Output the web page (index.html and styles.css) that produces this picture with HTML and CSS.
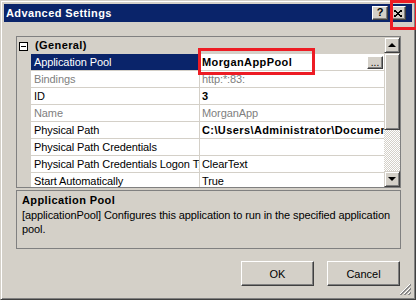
FILE: index.html
```html
<!DOCTYPE html>
<html lang="en">
<head>
    <meta charset="UTF-8">
    <title>Advanced Settings</title>
    <link rel="stylesheet" href="styles.css">
</head>
<body>
    <div class="window">
        <!-- title bar -->
        <div class="titlebar">
            <span class="title">Advanced Settings</span>
            <div class="caption-btns">
                <span class="cap-btn help">?</span>
                <span class="cap-btn close">
                    <svg width="8" height="7" viewBox="0 0 8 7"><path d="M0 0.5L7 6.5M1 0.5L8 6.5M7 0.5L0 6.5M8 0.5L1 6.5" stroke="#000" stroke-width="1" fill="none" shape-rendering="crispEdges"/></svg>
                </span>
            </div>
        </div>

        <div class="content">
            <!-- property grid -->
            <div class="grid">
                <div class="rows">
                    <div class="row cat">
                        <span class="margin"><span class="toggle"></span></span>
                        <span class="cat-name">(General)</span>
                    </div>
                    <div class="row selected">
                        <span class="margin"></span>
                        <span class="label">Application Pool</span>
                        <span class="value"><b>MorganAppPool</b><span class="dots">...</span></span>
                    </div>
                    <div class="row readonly">
                        <span class="margin"></span>
                        <span class="label">Bindings</span>
                        <span class="value">http:*:83:</span>
                    </div>
                    <div class="row">
                        <span class="margin"></span>
                        <span class="label">ID</span>
                        <span class="value"><b>3</b></span>
                    </div>
                    <div class="row readonly">
                        <span class="margin"></span>
                        <span class="label">Name</span>
                        <span class="value">MorganApp</span>
                    </div>
                    <div class="row">
                        <span class="margin"></span>
                        <span class="label">Physical Path</span>
                        <span class="value"><b>C:\Users\Administrator\Documents\Sites</b></span>
                    </div>
                    <div class="row">
                        <span class="margin"></span>
                        <span class="label">Physical Path Credentials</span>
                        <span class="value"></span>
                    </div>
                    <div class="row">
                        <span class="margin"></span>
                        <span class="label">Physical Path Credentials Logon Type</span>
                        <span class="value">ClearText</span>
                    </div>
                    <div class="row">
                        <span class="margin"></span>
                        <span class="label">Start Automatically</span>
                        <span class="value">True</span>
                    </div>
                </div>
                <div class="scrollbar">
                    <span class="sb-btn"><span class="arrow-up"></span></span>
                    <span class="sb-thumb"></span>
                    <span class="sb-track"></span>
                    <span class="sb-btn"><span class="arrow-down"></span></span>
                </div>
            </div>

            <!-- description -->
            <div class="desc">
                <div class="desc-title">Application Pool</div>
                <div class="desc-text">[applicationPool] Configures this application to run in the specified application pool.</div>
            </div>

            <div class="actions">
                <button class="btn">OK</button>
                <button class="btn">Cancel</button>
            </div>
        </div>

        <svg class="grip" width="12" height="12" viewBox="0 0 12 12">
            <path d="M11 1L1 11M11 5L5 11M11 9L9 11" stroke="#fff" fill="none"/>
            <path d="M12 1L1 12M12 2L2 12M12 5L5 12M12 6L6 12M12 9L9 12M12 10L10 12" stroke="#808080" fill="none" stroke-width="0.9"/>
        </svg>

        <span class="mark mark-close"></span>
        <span class="mark mark-pool"></span>
    </div>
</body>
</html>
```

FILE: styles.css
```css
* {
    box-sizing: border-box;
}

body {
    margin: 0;
    font-family: "Liberation Sans", Arial, sans-serif;
    font-size: 11px;
    letter-spacing: -0.1px;
    color: #000;
    background: #d4d0c8;
}

b,
.title,
.help,
.cat-name,
.desc-title {
    font-weight: bold;
    letter-spacing: 0.4px;
}

.window {
    position: relative;
    width: 416px;
    height: 300px;
    padding: 3px;
    background: #d4d0c8;
    border: 1px solid;
    border-color: #d4d0c8 #404040 #404040 #d4d0c8;
    box-shadow: inset 1px 1px #fff, inset -1px -1px #808080;
}

.titlebar {
    display: flex;
    align-items: center;
    justify-content: space-between;
    height: 18px;
    padding: 0 6px 0 2px;
    background: #0a246a;
}

.title {
    color: #fff;
    font-size: 11px;
}

.caption-btns {
    display: flex;
    gap: 2px;
}

.cap-btn {
    display: flex;
    align-items: center;
    justify-content: center;
    width: 16px;
    height: 14px;
    background: #d4d0c8;
    border: 1px solid;
    border-color: #fff #404040 #404040 #fff;
    box-shadow: inset -1px -1px #808080;
}

.help {
    font-size: 11px;
    line-height: 1;
    padding-bottom: 1px;
    letter-spacing: 0;
}

.content {
    padding: 14px 11px 0 12px;
}

/* property grid */
.grid {
    display: flex;
    height: 152px;
    border: 1px solid #808080;
    background: #fff;
}

.rows {
    flex: 1;
    overflow: hidden;
}

.row {
    display: grid;
    grid-template-columns: 14px 169px 1fr;
    height: 17px;
    line-height: 16px;
}

.margin {
    background: #d4d0c8;
}

.label,
.value {
    display: flex;
    white-space: nowrap;
    overflow: hidden;
    border-bottom: 1px solid #d4d0c8;
}

.label {
    padding-left: 3px;
    border-right: 1px solid #d4d0c8;
}

.value {
    padding-left: 2px;
    justify-content: space-between;
}

.cat {
    grid-template-columns: 14px 1fr;
    background: #d4d0c8;
}

.cat .margin {
    display: flex;
    align-items: center;
    padding: 1px 0 0 2px;
}

.toggle {
    position: relative;
    width: 9px;
    height: 9px;
    border: 1px solid #000;
    background: #fff;
}

.toggle::after {
    content: "";
    position: absolute;
    left: 1px;
    top: 3px;
    width: 5px;
    height: 1px;
    background: #000;
}

.cat-name {
    padding-left: 4px;
}

.selected .label {
    background: #0a246a;
    color: #fff;
}

.readonly .label,
.readonly .value {
    color: #808080;
}

.dots {
    flex: none;
    align-self: flex-end;
    width: 16px;
    height: 13px;
    margin: 0 1px 1px 0;
    font-size: 10px;
    line-height: 12px;
    letter-spacing: 0;
    text-align: center;
    background: #d4d0c8;
    border: 1px solid;
    border-color: #fff #404040 #404040 #fff;
    box-shadow: inset -1px -1px #808080;
}

/* scrollbar */
.scrollbar {
    display: flex;
    flex-direction: column;
    width: 16px;
}

.sb-btn,
.sb-thumb {
    display: flex;
    align-items: center;
    justify-content: center;
    background: #d4d0c8;
    border: 1px solid;
    border-color: #d4d0c8 #404040 #404040 #d4d0c8;
    box-shadow: inset 1px 1px #fff, inset -1px -1px #808080;
}

.sb-btn {
    height: 16px;
}

.sb-thumb {
    height: 77px;
}

.sb-track {
    flex: 1;
    background: repeating-conic-gradient(#d4d0c8 0 25%, #fff 0 50%) 0 0 / 2px 2px;
}

.arrow-up,
.arrow-down {
    width: 0;
    height: 0;
    border-left: 4px solid transparent;
    border-right: 4px solid transparent;
}

.arrow-up {
    border-bottom: 4px solid #000;
}

.arrow-down {
    border-top: 4px solid #000;
}

/* description */
.desc {
    height: 59px;
    margin-top: 2px;
    padding: 2px 1px 2px 5px;
    border: 1px solid #808080;
    line-height: 14px;
}

.desc-title {
    margin-bottom: 1px;
}

.actions {
    display: flex;
    justify-content: flex-end;
    gap: 13px;
    margin-top: 12px;
    padding-right: 1px;
}

.btn {
    width: 73px;
    height: 25px;
    font-family: inherit;
    font-size: 11px;
    color: #000;
    background: #d4d0c8;
    border: 1px solid;
    border-color: #fff #404040 #404040 #fff;
    box-shadow: inset -1px -1px #808080;
    padding: 0;
}

.grip {
    position: absolute;
    right: 4px;
    bottom: 4px;
}

/* red highlight marks */
.mark {
    position: absolute;
    border: 3px solid #ed1c24;
}

.mark-close {
    left: 389px;
    top: -1px;
    width: 28px;
    height: 30px;
}

.mark-pool {
    left: 197px;
    top: 47px;
    width: 117px;
    height: 27px;
}
```
